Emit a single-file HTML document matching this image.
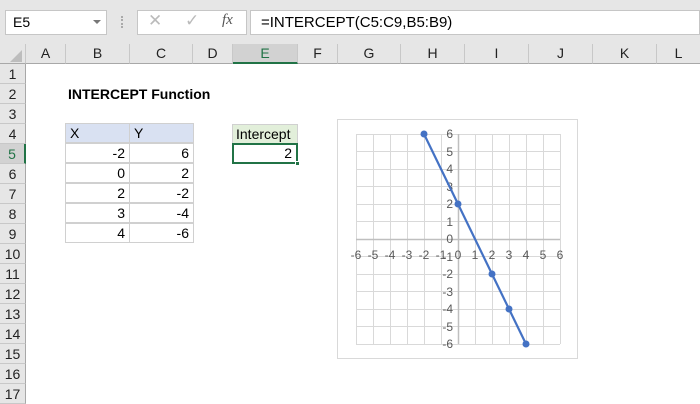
<!DOCTYPE html>
<html><head><style>
*{margin:0;padding:0;box-sizing:border-box}
body{width:700px;height:400px;overflow:hidden;background:#fff;font-family:"Liberation Sans",sans-serif;position:relative;font-size:14px;color:#000}
.abs{position:absolute}
.top{left:0;top:0;width:700px;height:44px;background:#e6e6e6}
.box{background:#fff;border:1px solid #c6c6c6}
.ch{position:absolute;top:44px;height:20px;background:#e6e6e6;border-right:1px solid #c8c8c8;border-bottom:1px solid #a8a8a8;text-align:center;line-height:19px;font-size:14px;color:#222}
.rh{position:absolute;left:0;width:26px;height:20px;background:#e6e6e6;border-bottom:1px solid #c8c8c8;border-right:1px solid #a8a8a8;text-align:center;line-height:20px;font-size:14px;color:#222}
.c{position:absolute;height:20px;line-height:19px;padding:0 4px;border:1px solid #d0d0d0;font-size:14px}
</style></head><body>
<div class="abs top"></div>
<div class="abs box" style="left:5px;top:10px;width:102px;height:25px;line-height:23px;padding-left:7px;font-size:14px">E5</div>
<div class="abs" style="left:93px;top:20px;width:0;height:0;border-left:4px solid transparent;border-right:4px solid transparent;border-top:4px solid #777"></div>
<div class="abs" style="left:121px;top:16px;width:2px;height:12px;border-left:2px dotted #aaa"></div>
<div class="abs box" style="left:137px;top:10px;width:110px;height:25px"></div>
<div class="abs" style="left:148px;top:11px;color:#bbb;font-size:17px">✕</div>
<div class="abs" style="left:185px;top:11px;color:#bbb;font-size:17px">✓</div>
<div class="abs" style="left:222px;top:12px;color:#555;font-family:'Liberation Serif',serif;font-style:italic;font-size:15px">fx</div>
<div class="abs box" style="left:250px;top:10px;width:450px;height:25px;line-height:23px;padding-left:10px;font-size:15px">=INTERCEPT(C5:C9,B5:B9)</div>

<div class="ch" style="left:0;width:26px"></div>
<div class="abs" style="left:10px;top:50px;width:0;height:0;border-left:12px solid transparent;border-bottom:12px solid #bdbdbd"></div>
<div class="ch" style="left:26px;width:40px">A</div>
<div class="ch" style="left:66px;width:64px">B</div>
<div class="ch" style="left:130px;width:63px">C</div>
<div class="ch" style="left:193px;width:40px">D</div>
<div class="ch" style="left:233px;width:65px;background:#d2d2d2;border-bottom:2px solid #217346;color:#217346">E</div>
<div class="ch" style="left:298px;width:40px">F</div>
<div class="ch" style="left:338px;width:63px">G</div>
<div class="ch" style="left:401px;width:64px">H</div>
<div class="ch" style="left:465px;width:64px">I</div>
<div class="ch" style="left:529px;width:64px">J</div>
<div class="ch" style="left:593px;width:64px">K</div>
<div class="ch" style="left:657px;width:43px;border-right:none">L</div>

<div class="rh" style="top:64px">1</div>
<div class="rh" style="top:84px">2</div>
<div class="rh" style="top:104px">3</div>
<div class="rh" style="top:124px">4</div>
<div class="rh" style="top:144px;background:#d2d2d2;border-right:2px solid #217346;color:#217346">5</div>
<div class="rh" style="top:164px">6</div>
<div class="rh" style="top:184px">7</div>
<div class="rh" style="top:204px">8</div>
<div class="rh" style="top:224px">9</div>
<div class="rh" style="top:244px">10</div>
<div class="rh" style="top:264px">11</div>
<div class="rh" style="top:284px">12</div>
<div class="rh" style="top:304px">13</div>
<div class="rh" style="top:324px">14</div>
<div class="rh" style="top:344px">15</div>
<div class="rh" style="top:364px">16</div>
<div class="rh" style="top:384px">17</div>

<div class="abs" style="left:68px;top:86px;font-weight:bold;font-size:14px">INTERCEPT Function</div>

<div class="c" style="left:65px;top:123px;width:65px;background:#d9e1f2">X</div>
<div class="c" style="left:129px;top:123px;width:65px;background:#d9e1f2">Y</div>
<div class="c" style="left:65px;top:143px;width:65px;text-align:right">-2</div>
<div class="c" style="left:129px;top:143px;width:65px;text-align:right">6</div>
<div class="c" style="left:65px;top:163px;width:65px;text-align:right">0</div>
<div class="c" style="left:129px;top:163px;width:65px;text-align:right">2</div>
<div class="c" style="left:65px;top:183px;width:65px;text-align:right">2</div>
<div class="c" style="left:129px;top:183px;width:65px;text-align:right">-2</div>
<div class="c" style="left:65px;top:203px;width:65px;text-align:right">3</div>
<div class="c" style="left:129px;top:203px;width:65px;text-align:right">-4</div>
<div class="c" style="left:65px;top:223px;width:65px;text-align:right">4</div>
<div class="c" style="left:129px;top:223px;width:65px;text-align:right">-6</div>

<div class="c" style="left:232px;top:124px;width:66px;background:#e2efda;padding-left:3px;line-height:18px">Intercept</div>
<div class="abs" style="left:232px;top:143px;width:66px;height:21px;border:2px solid #217346;text-align:right;padding-right:4px;line-height:17px">2</div>
<div class="abs" style="left:295px;top:161px;width:5px;height:5px;background:#217346;border:1px solid #fff"></div>

<svg class="abs" style="left:0;top:0" width="700" height="400">
<rect x="337.5" y="119.5" width="240" height="239" fill="#fff" stroke="#d9d9d9"/>
<g stroke="#d9d9d9" stroke-width="1">
<path d="M356.5 134V344M373.5 134V344M390.5 134V344M407.5 134V344M424.5 134V344M441.5 134V344M475.5 134V344M492.5 134V344M509.5 134V344M526.5 134V344M543.5 134V344M560.5 134V344"/>
<path d="M356 134.5H560M356 151.5H560M356 169.5H560M356 186.5H560M356 204.5H560M356 221.5H560M356 256.5H560M356 274.5H560M356 291.5H560M356 309.5H560M356 326.5H560M356 344.5H560"/>
</g>
<path d="M458.5 134V344M356 239.5H560" stroke="#bfbfbf" stroke-width="1.5"/>
<g font-family="Liberation Sans,sans-serif" font-size="12" fill="#595959" text-anchor="middle">
<text x="356" y="259">-6</text><text x="373" y="259">-5</text><text x="390" y="259">-4</text><text x="407" y="259">-3</text><text x="424" y="259">-2</text><text x="441" y="259">-1</text><text x="458" y="259">0</text><text x="475" y="259">1</text><text x="492" y="259">2</text><text x="509" y="259">3</text><text x="526" y="259">4</text><text x="543" y="259">5</text><text x="560" y="259">6</text>
</g>
<g font-family="Liberation Sans,sans-serif" font-size="12" fill="#595959" text-anchor="end">
<text x="453" y="138">6</text><text x="453" y="156">5</text><text x="453" y="173">4</text><text x="453" y="191">3</text><text x="453" y="208">2</text><text x="453" y="226">1</text><text x="453" y="243">0</text><text x="453" y="261">-1</text><text x="453" y="278">-2</text><text x="453" y="296">-3</text><text x="453" y="313">-4</text><text x="453" y="331">-5</text><text x="453" y="348">-6</text>
</g>
<polyline points="424,134 458,204 492,274 509,309 526,344" fill="none" stroke="#4472c4" stroke-width="2.2"/>
<g fill="#4472c4"><circle cx="424" cy="134" r="3.5"/><circle cx="458" cy="204" r="3.5"/><circle cx="492" cy="274" r="3.5"/><circle cx="509" cy="309" r="3.5"/><circle cx="526" cy="344" r="3.5"/></g>
</svg>
</body></html>
